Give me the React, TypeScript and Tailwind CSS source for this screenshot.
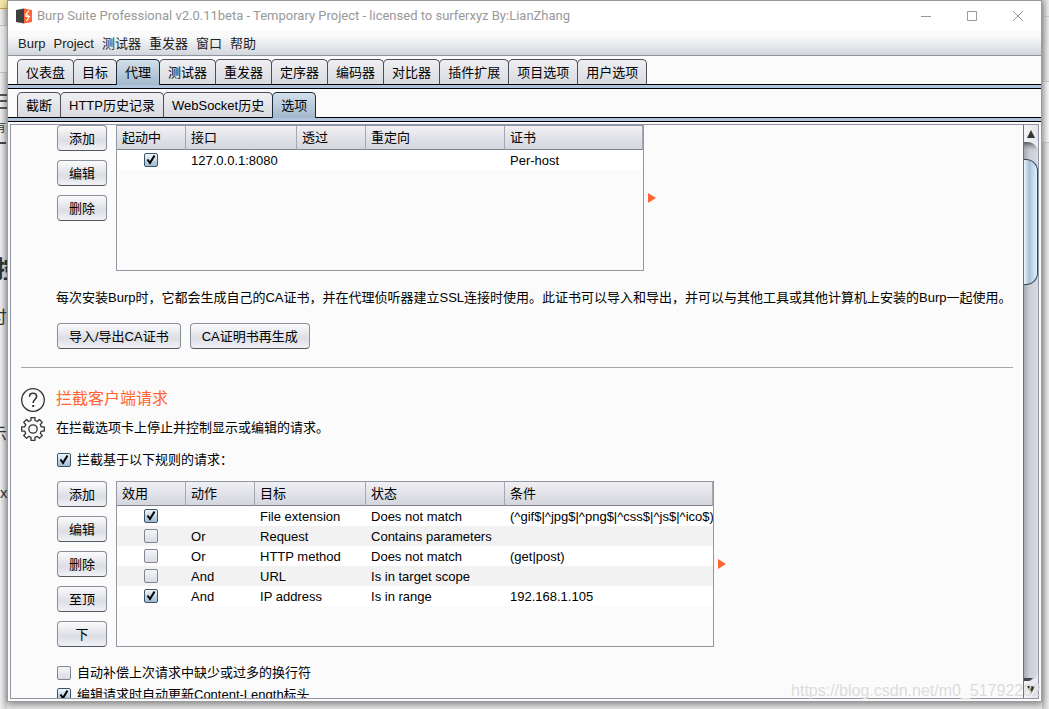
import React, { useState } from 'react';

const MENUS = ['Burp', 'Project', '测试器', '重发器', '窗口', '帮助'];

const MAIN_TABS = [
  '仪表盘',
  '目标',
  '代理',
  '测试器',
  '重发器',
  '定序器',
  '编码器',
  '对比器',
  '插件扩展',
  '项目选项',
  '用户选项',
];

const PROXY_TABS = ['截断', 'HTTP历史记录', 'WebSocket历史', '选项'];

type Row = { enabled: boolean; cells: string[] };

const LISTENERS: Row[] = [{ enabled: true, cells: ['127.0.0.1:8080', '', '', 'Per-host'] }];

const RULES: Row[] = [
  { enabled: true, cells: ['', 'File extension', 'Does not match', '(^gif$|^jpg$|^png$|^css$|^js$|^ico$)'] },
  { enabled: false, cells: ['Or', 'Request', 'Contains parameters', ''] },
  { enabled: false, cells: ['Or', 'HTTP method', 'Does not match', '(get|post)'] },
  { enabled: false, cells: ['And', 'URL', 'Is in target scope', ''] },
  { enabled: true, cells: ['And', 'IP address', 'Is in range', '192.168.1.105'] },
];

const Logo = () => (
  <svg width="16" height="16" viewBox="0 0 16 16" aria-hidden="true">
    <path d="M0 2 8 .5v15L0 14z" fill="#404040" />
    <path d="M8 .5 16 2v12l-8 1.5z" fill="#ff6633" />
    <path d="M13 2.5 9.6 7h2.6M12.8 7.5 11 8.5H9.4M10.4 8.5h3l-3 4.5" fill="none" stroke="#fff" strokeWidth="1.2" />
  </svg>
);

const HelpIcon = () => (
  <svg width="24" height="24" viewBox="0 0 24 24" fill="none" stroke="#333" aria-hidden="true">
    <circle cx="12" cy="12" r="11.3" strokeWidth="1.3" />
    <path d="M8.5 8.8c0-2.3 1.6-3.500 3.600-3.500s3.500 1.200 3.500 3.200c0 2.800-3.500 3.200-3.500 6.500" strokeWidth="1.6" />
    <path d="M11.2 17h2v2h-2z" fill="#333" stroke="none" />
  </svg>
);

const GearIcon = () => (
  <svg width="24" height="24" viewBox="0 0 24 24" fill="none" stroke="#333" strokeWidth="1.3" aria-hidden="true">
    <circle cx="12" cy="12" r="4.2" />
    <path
      d="M10 .7h4v2.8l2.3 1 2.1-2 2.9 2.9-2 2.1 1 2.4h3v4.2h-3l-1 2.3 2 2.1-2.9 2.9-2.1-2-2.3 1v2.9h-4v-2.9l-2.3-1-2.1 2-2.9-2.9 2-2.1-1-2.3h-3V9.9h3l1-2.4-2-2.1 2.9-2.9 2.1 2 2.3-1z"
      strokeLinejoin="round"
    />
  </svg>
);

const Arrow = () => (
  <svg className="ml-1 shrink-0 self-center" width="8" height="10" viewBox="0 0 8 10" aria-hidden="true">
    <path d="M0 0l8 5-8 5z" fill="#ff6633" />
  </svg>
);

const Check: React.FC<{ label?: string; defaultChecked: boolean }> = ({ label, defaultChecked }) => (
  <span className="relative block h-[14px] w-[14px] shrink-0">
    <input
      type="checkbox"
      aria-label={label}
      defaultChecked={defaultChecked}
      className="peer block h-[14px] w-[14px] appearance-none rounded-[2px] border border-[#81858f] bg-linear-to-b from-[#f4f5f8] to-[#d9dce3] checked:border-[#3d5468] checked:from-[#f0f6fb] checked:to-[#9fbad2]"
    />
    <svg
      className="pointer-events-none absolute top-0 left-0 hidden peer-checked:block"
      width="14"
      height="14"
      viewBox="0 0 14 14"
      fill="none"
      stroke="#000"
      strokeWidth="2"
    >
      <path d="M3.5 6.5 6 10 10.5 2.5" />
    </svg>
  </span>
);

const Button: React.FC<{ children: React.ReactNode }> = ({ children }) => (
  <button className="h-[26px] min-w-[50px] rounded-[4px] border border-[#8b8f99] border-b-[#55585f] bg-linear-to-b from-[#fbfbfd] via-[#dcdee4] via-60% to-[#f1f2f6] px-[11px] pt-[2px] leading-5 whitespace-nowrap">
    {children}
  </button>
);

interface TabsProps {
  tabs: string[];
  active: string;
  onSelect: (tab: string) => void;
}

const Tabs: React.FC<TabsProps> = ({ tabs, active, onSelect }) => (
  <div className="shrink-0 pt-[3px]">
    <div role="tablist" className="flex pl-[9px]">
      {tabs.map((tab) => (
        <button
          key={tab}
          role="tab"
          aria-selected={tab === active}
          onClick={() => onSelect(tab)}
          className={`-mr-px rounded-t-[5px] border border-b-0 px-2 pt-px leading-5 whitespace-nowrap ${
            tab === active
              ? 'z-10 -mb-px h-[26px] border-[#1c2b3a] bg-linear-to-b from-[#d3e0ea] to-[#a3b8cc]'
              : 'h-[25px] border-[#4b4e55] bg-linear-to-b from-[#f0f0f3] to-[#d8dae0]'
          }`}
        >
          {tab}
        </button>
      ))}
    </div>
    <div className="h-[5px] border-y border-black bg-[#b0c4dd]" />
  </div>
);

interface GridProps {
  name: string;
  heads: string[];
  cols: string[];
  rows: Row[];
  className: string;
}

const Grid: React.FC<GridProps> = ({ name, heads, cols, rows, className }) => (
  <div className={`shrink-0 overflow-hidden border border-[#9297a1] ${className}`}>
    <table aria-label={name} className="w-full table-fixed border-separate border-spacing-0">
      <colgroup>
        {cols.map((width, i) => (
          <col key={i} className={width} />
        ))}
      </colgroup>
      <thead>
        <tr className="h-6">
          {heads.map((head) => (
            <th
              key={head}
              className="border-r border-b border-r-[#a5a8b0] border-b-[#7d828c] bg-linear-to-b from-[#f0f0f4] to-[#d4d6dd] px-[5px] py-0 text-left leading-5 font-normal"
            >
              {head}
            </th>
          ))}
        </tr>
      </thead>
      <tbody>
        {rows.map((row, i) => (
          <tr key={i} className="bg-white even:bg-[#f2f2f2]">
            <td className="p-0">
              <div className="flex h-5 items-center justify-center pr-px">
                <Check label={`${heads[0]} ${i + 1}`} defaultChecked={row.enabled} />
              </div>
            </td>
            {row.cells.map((cell, j) => (
              <td key={j} className="px-[5px] pt-px pb-0 leading-[19px] whitespace-nowrap">
                {cell}
              </td>
            ))}
          </tr>
        ))}
      </tbody>
    </table>
  </div>
);

const ScrollBar = () => (
  <div className="flex w-[15px] shrink-0 flex-col border-l border-[#6d7078] bg-linear-to-r from-[#a9abb3] via-[#cdcfd6] via-40% to-[#d9dbe2]">
    <button aria-label="向上滚动" className="flex h-[17px] items-center justify-center bg-linear-to-r from-[#f5f5f8] to-[#e3e4e9]">
      <svg width="8" height="8" viewBox="0 0 8 8">
        <path d="M4 0l4 8H0z" fill="#333" />
      </svg>
    </button>
    <svg className="h-[17px] w-full" viewBox="0 0 14 17" aria-hidden="true">
      <defs>
        <linearGradient id="well" x1="0" y1="0" x2="0" y2="1">
          <stop offset="0" stopColor="#55575d" />
          <stop offset="0.6" stopColor="#c4c6cd" stopOpacity="0" />
        </linearGradient>
      </defs>
      <path d="M0 0h14v17H0z" fill="url(#well)" />
      <path d="M3 0h11v9C13 4 9 0 3 0z" fill="#ebecf0" />
    </svg>
    <div className="h-[126px] rounded-r-[12px] border border-l-0 border-[#2e475c] bg-linear-to-r from-[#eef5fb] via-[#a9c1d9] via-40% to-[#e0f2ff]" />
    <div className="flex-1" />
    <svg className="h-[8px] w-full" viewBox="0 0 14 8" aria-hidden="true">
      <path d="M0 5h9l-3 3H0z" fill="#44464c" />
      <path d="M14 0v8H4c5 0 9-3 10-8z" fill="#ebecf0" />
    </svg>
    <button aria-label="向下滚动" className="flex h-[17px] items-center justify-center bg-linear-to-r from-[#f5f5f8] to-[#e3e4e9]">
      <svg width="8" height="8" viewBox="0 0 8 8">
        <path d="M0 0h8L4 8z" fill="#333" />
      </svg>
    </button>
  </div>
);

// sliver of the browser page that shows past the window's left edge
const PageEdge = () => (
  <div className="flex w-[7px] shrink-0 flex-col overflow-hidden bg-linear-to-r from-[#f0f0f0] to-[#cfcfcf] whitespace-nowrap text-[#333]">
    <div className="h-[9px] shrink-0 border-b border-[#c9a94a] bg-[#f5e7a8]" />
    <div className="h-[17px] shrink-0 border-b border-[#c4c4c4]" />
    <div className="h-[47px] shrink-0 border-b border-[#c4c4c4] bg-[#ededed]" />
    <div className="mt-[21px] h-[15px] shrink-0 border-y-2 border-[#555]">
      <div className="mt-[4px] h-[2px] bg-[#555]" />
    </div>
    <div className="mt-[9px] -ml-[6px] text-[12px] leading-5">有</div>
    <div className="mt-[4px] h-[2px] w-[6px] shrink-0 bg-[#444]" />
    <div className="mt-[112px] -ml-[4px] text-[24px] leading-7 font-bold">控</div>
    <div className="mt-[22px] -ml-[10px] text-[17px] leading-6">付</div>
    <div className="mt-[93px] -ml-[10px] text-[17px] leading-6">示</div>
    <div className="mt-[34px] text-[15px] leading-6">x</div>
  </div>
);

const App: React.FC = () => {
  const [mainTab, setMainTab] = useState('代理');
  const [proxyTab, setProxyTab] = useState('选项');

  return (
    <div className="flex h-screen overflow-hidden bg-[#e4e4e4] font-['Liberation_Sans','Noto_Sans_CJK_SC',sans-serif] text-[13px] text-black">
      <PageEdge />

      <div className="flex min-w-0 flex-1 flex-col">
        <div className="relative flex min-h-0 flex-1 flex-col border border-[#9a9a9a] bg-[#fbfbfb] shadow-[0_2px_7px_rgba(0,0,0,0.45)]">
          <header className="flex h-[30px] shrink-0 items-center bg-white pl-2">
            <Logo />
            <h1 className="ml-[5px] flex-1 truncate font-[Roboto,sans-serif] text-[13px] leading-5 text-[#999]">
              Burp Suite Professional v2.0.11beta - Temporary Project - licensed to surferxyz By:LianZhang
            </h1>
            <button aria-label="最小化" className="flex w-[46px] justify-center">
              <svg width="10" height="10" viewBox="0 0 10 10" stroke="#999">
                <path d="M0 5.5h10" />
              </svg>
            </button>
            <button aria-label="最大化" className="flex w-[46px] justify-center">
              <svg width="10" height="10" viewBox="0 0 10 10" fill="none" stroke="#999">
                <path d="M.5.5h9v9h-9z" />
              </svg>
            </button>
            <button aria-label="关闭" className="flex w-[46px] justify-center">
              <svg width="10" height="10" viewBox="0 0 10 10" stroke="#999">
                <path d="M0 0l10 10M10 0L0 10" />
              </svg>
            </button>
          </header>

          <nav className="flex h-[25px] shrink-0 items-center gap-2 border-b border-[#8f939c] bg-linear-to-b from-[#fafafb] from-20% to-[#d2d6dc] pt-[2px] pl-[10px] text-[#222]">
            {MENUS.map((menu) => (
              <button key={menu} className="leading-5">
                {menu}
              </button>
            ))}
          </nav>

          <Tabs tabs={MAIN_TABS} active={mainTab} onSelect={setMainTab} />
          <Tabs tabs={PROXY_TABS} active={proxyTab} onSelect={setProxyTab} />

          <main className="mx-[2px] my-[2px] flex min-h-0 flex-1 border border-[#9297a8]">
            <div className="min-w-0 flex-1 overflow-hidden">
              <section className="pl-[46px]">
                <div className="flex">
                  <div className="mr-[9px] flex flex-col gap-[9px]">
                    <Button>添加</Button>
                    <Button>编辑</Button>
                    <Button>删除</Button>
                  </div>
                  <Grid
                    name="代理侦听器"
                    heads={['起动中', '接口', '透过', '重定向', '证书']}
                    cols={['w-[69px]', 'w-[111px]', 'w-[69px]', 'w-[139px]', 'w-[138px]']}
                    rows={LISTENERS}
                    className="h-[146px] w-[528px]"
                  />
                  <Arrow />
                </div>
                <p className="mt-[17px] -ml-px leading-5 whitespace-nowrap">
                  每次安装Burp时，它都会生成自己的CA证书，并在代理侦听器建立SSL连接时使用。此证书可以导入和导出，并可以与其他工具或其他计算机上安装的Burp一起使用。
                </p>
                <div className="mt-[15px] flex gap-[9px]">
                  <Button>导入/导出CA证书</Button>
                  <Button>CA证明书再生成</Button>
                </div>
              </section>

              <hr className="mx-[10px] mt-[18px] border-[#a5a7b0]" />

              <section className="mt-5 flex pl-[10px]">
                <div className="flex w-9 shrink-0 flex-col gap-[5px]">
                  <button aria-label="说明" className="h-6 w-6">
                    <HelpIcon />
                  </button>
                  <button aria-label="设置" className="h-6 w-6">
                    <GearIcon />
                  </button>
                </div>
                <div className="pt-px">
                  <h2 className="-ml-px text-[16px] leading-5 text-[#ff6633]">拦截客户端请求</h2>
                  <p className="mt-[9px] -ml-px leading-5">在拦截选项卡上停止并控制显示或编辑的请求。</p>
                  <label className="mt-[12px] flex items-center gap-[6px] leading-5">
                    <Check defaultChecked />
                    拦截基于以下规则的请求：
                  </label>
                  <div className="mt-[11px] flex">
                    <div className="mr-[9px] flex flex-col gap-[9px]">
                      <Button>添加</Button>
                      <Button>编辑</Button>
                      <Button>删除</Button>
                      <Button>至顶</Button>
                      <Button>下</Button>
                    </div>
                    <Grid
                      name="请求拦截规则"
                      heads={['效用', '动作', '目标', '状态', '条件']}
                      cols={['w-[69px]', 'w-[69px]', 'w-[111px]', 'w-[139px]', 'w-[208px]']}
                      rows={RULES}
                      className="h-[166px] w-[598px]"
                    />
                    <Arrow />
                  </div>
                  <label className="mt-4 flex items-center gap-[6px] leading-5">
                    <Check defaultChecked={false} />
                    自动补偿上次请求中缺少或过多的换行符
                  </label>
                  <label className="mt-[2px] flex items-center gap-[6px] leading-5">
                    <Check defaultChecked />
                    编辑请求时自动更新Content-Length标头
                  </label>
                </div>
              </section>
            </div>
            <ScrollBar />
          </main>

          <div className="pointer-events-none absolute right-0 bottom-0 text-[16px] leading-5 text-[#dcdcdc]">
            https://blog.csdn.net/m0_51792282
          </div>
        </div>
        <div className="h-[7px] shrink-0" />
      </div>

      <div className="w-[7px] shrink-0 bg-linear-to-r from-[#c4c4c4] to-[#ececec]">
        <div className="h-[17px] border-b border-[#c9c9c9]" />
        <div className="h-[65px] border-b border-[#c9c9c9]" />
        <div className="h-[61px] border-b border-[#c9c9c9] bg-linear-to-r from-[#d6d6d6] to-[#f8f8f8]" />
      </div>
    </div>
  );
};

export default App;
